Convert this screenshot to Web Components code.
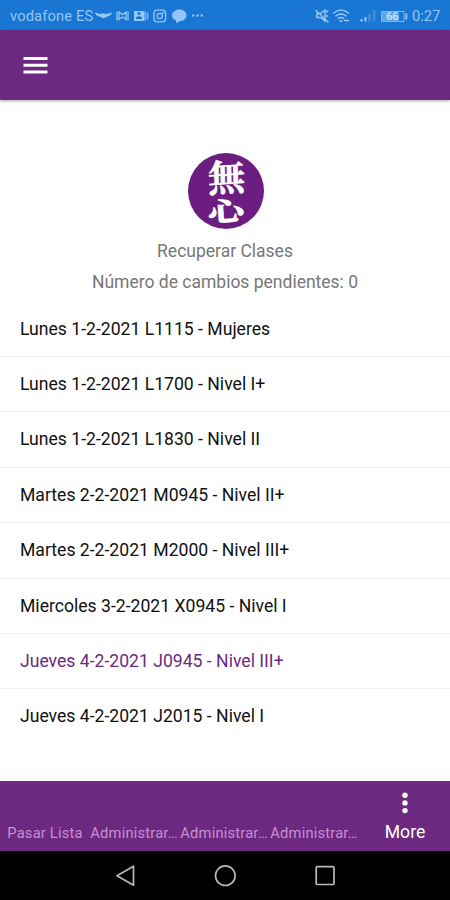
<!DOCTYPE html>
<html lang="es">
<head>
<meta charset="utf-8">
<title>Recuperar Clases</title>
<style>
html, body {
  margin: 0;
  height: 100%;
}
body {
  font-family: Roboto, sans-serif;
  background: #fff;
  overflow: hidden;
}
</style>
</head>
<body>
<attendance-app></attendance-app>
<script>
class ShadowElement extends HTMLElement {
    constructor() {
        super();
        this.attachShadow({ mode: "open" });
        const template = document.createElement("template");
        template.innerHTML = this.constructor.html;
        this.shadowRoot.appendChild(template.content.cloneNode(true));
    }
}

class StatusBar extends ShadowElement {
    static html = `
<style>
:host {
  display: flex;
  align-items: center;
  justify-content: space-between;
  box-sizing: border-box;
  height: 30px;
  padding: 2px 9px 0 10px;
  background: #1976d2;
  color: #93c6f8;
  font-size: 14.700px;
}
.left, .right { display: flex; align-items: center; }
.carrier { width: 84px; white-space: nowrap; letter-spacing: .15px; }
svg { display: block; flex: none; }
.time { margin-left: 3px; width: 29px; white-space: nowrap; }
.battery { position: relative; margin-left: 5px; width: 28px; height: 13px; }
.battery span {
  position: absolute;
  left: 5px;
  top: 0;
  font-size: 11px;
  font-weight: 700;
  line-height: 13px;
  color: #c5e2ff;
}
</style>
<div class="left">
  <span class="carrier">vodafone ES</span>
  <svg width="112" height="16" viewBox="0 0 112 16" fill="currentColor">
    <path d="M1 4.500 L6 6 L9 5.300 L12 6 L18 4.500 Q17 8 13.500 8.500 L9.500 10.500 L6 8.700 Q2 8.500 1 4.500Z"/>
    <path d="M23 3.500V12.500M34 3.500V12.500M25 4L28.500 6.500L32 4V11.500L28.500 9L25 11.500Z" fill="none" stroke="currentColor" stroke-width="1.300"/>
    <path fill-rule="evenodd" d="M40 3h10.500v10H40zM43.500 5.500a1.500 1.500 0 1 0 3 0a1.500 1.500 0 1 0-3 0M42 11V9.500q3-2.500 6 0V11z"/>
    <path d="M51.300 3.500h1v9h-1zM53.300 4.500h1v7h-1z"/>
    <g fill="none" stroke="currentColor" stroke-width="1.300">
      <rect x="60" y="2.200" width="11.600" height="11.600" rx="3"/>
      <circle cx="65.800" cy="8" r="2.700"/>
    </g>
    <circle cx="69" cy="4.800" r=".9"/>
    <path d="M85.500 1.500c4.200 0 7 2.500 7 5.800s-2.800 5.700-6 5.700l-4.500 2v-2.800C79.500 11.500 78 10 78 7.300c0-3.300 3.300-5.800 7.500-5.800z"/>
    <circle cx="99.200" cy="7.500" r="1.200"/><circle cx="103.500" cy="7.500" r="1.200"/><circle cx="107.800" cy="7.500" r="1.200"/>
  </svg>
</div>
<div class="right">
  <svg width="64" height="16" viewBox="0 0 64 16" fill="none" stroke="currentColor" stroke-width="1.500">
    <path d="M5 5.500h3.500l4.500-3.500v11l-4.500-3.500H5zM3.500 2l13 12.500M14.500 4.500l1.500-2M14 8h2"/>
    <path d="M21 5.500q8-7 16 0M23.500 8.300q5.500-4.800 11 0M26 10.800q3-2.500 6 0"/>
    <path d="M27.500 13h3M32 12.500h5" stroke-width="1.700"/>
    <path d="M49.500 13.500v-2.500M53.500 13.500V9" stroke-width="2"/>
    <path d="M57.500 13.500V6M62 13.500V2" stroke-width="2.600" opacity=".3"/>
  </svg>
  <div class="battery">
    <svg width="28" height="13" viewBox="0 0 28 13">
      <rect x="0" y="1" width="18" height="11" rx="1" fill="#5ea5ec"/>
      <path d="M.5 1.500h22.500v10H.5z" fill="none" stroke="#78b5f1"/>
      <path d="M24.300 3.500h2v6h-2z" fill="#8cc1f5"/>
    </svg>
    <span>66</span>
  </div>
  <span class="time">0:27</span>
</div>`;
}

class TopBar extends ShadowElement {
    static html = `
<style>
:host {
  display: flex;
  align-items: center;
  box-sizing: border-box;
  height: 70px;
  padding-left: 23px;
  background: #6c297f;
  box-shadow: 0 1px 3px rgba(0, 0, 0, .35);
}
svg { display: block; }
</style>
<svg width="25" height="18" viewBox="0 0 25 18" fill="#fff">
  <path d="M.5 1h24v3H.5zM.5 7.700h24v3H.5zM.5 14.400h24v3H.5z"/>
</svg>`;
}

class DojoLogo extends ShadowElement {
    static html = `
<style>
:host {
  display: flex;
  flex-direction: column;
  align-items: center;
  box-sizing: border-box;
  width: 76px;
  height: 76px;
  border-radius: 50%;
  background: #6c1d80;
  color: #fff;
  font-family: "Noto Serif CJK JP", "Noto Sans CJK JP", sans-serif;
  font-weight: 700;
}
span { display: block; flex: none; }
.mu {
  height: 44px;
  line-height: 44px;
  font-size: 37px;
  transform: rotate(-4deg) skewX(-3deg);
  -webkit-text-stroke: .7px #fff;
}
.shin {
  height: 26px;
  line-height: 26px;
  font-size: 36px;
  transform: rotate(-4deg) scaleY(.72);
  -webkit-text-stroke: 1.2px #fff;
}
</style>
<span class="mu">無</span>
<span class="shin">心</span>`;
}

class ClassItem extends ShadowElement {
    static html = `
<style>
:host {
  display: block;
  box-sizing: border-box;
  height: 55.430px;
  padding-left: 20px;
  border-bottom: 1px solid #f0f0f0;
  color: #111;
  font-size: 17.600px;
  line-height: 55px;
  white-space: nowrap;
}
:host([selected]) { color: #6c297f; }
:host(:last-of-type) { border-bottom-color: transparent; }
</style>
<slot></slot>`;
}

class TabItem extends ShadowElement {
    static html = `
<style>
:host {
  display: flex;
  flex-direction: column;
  align-items: center;
  justify-content: flex-end;
  box-sizing: border-box;
  width: 90px;
  height: 70px;
  padding-bottom: 9px;
  color: #c78fd5;
  font-size: 14.700px;
  line-height: 18px;
  letter-spacing: .2px;
  white-space: nowrap;
}
:host([active]) {
  padding-bottom: 8px;
  color: #fff;
  font-size: 17.600px;
  line-height: 22px;
  letter-spacing: 0;
}
</style>
<slot name="icon"></slot>
<slot></slot>`;
}

class TabBar extends ShadowElement {
    static html = `
<style>
:host { display: flex; height: 70px; background: #6c297f; }
svg { display: block; margin-bottom: 7px; }
.long { padding-right: 2px; }
</style>
<tab-item>Pasar Lista</tab-item>
<tab-item class="long">Administrar…</tab-item>
<tab-item class="long">Administrar…</tab-item>
<tab-item class="long">Administrar…</tab-item>
<tab-item active>
  <svg slot="icon" width="6" height="22" viewBox="0 0 6 22" fill="#fff">
    <circle cx="3" cy="3.200" r="2.700"/><circle cx="3" cy="10.900" r="2.700"/><circle cx="3" cy="18.600" r="2.700"/>
  </svg>More</tab-item>`;
}

class NavKeys extends ShadowElement {
    static html = `
<style>
:host {
  display: flex;
  align-items: center;
  justify-content: center;
  gap: 76px;
  height: 49px;
  background: #000;
}
svg { display: block; }
</style>
<svg width="24" height="24" viewBox="0 0 24 24" fill="none" stroke="#b9b9b9" stroke-width="1.700" stroke-linejoin="round"><path d="M4 11.700L20.500 2.200v19z"/></svg>
<svg width="24" height="24" viewBox="0 0 24 24" fill="none" stroke="#b9b9b9" stroke-width="1.700"><circle cx="12.300" cy="11.700" r="9.800"/></svg>
<svg width="24" height="24" viewBox="0 0 24 24" fill="none" stroke="#b9b9b9" stroke-width="1.700"><rect x="3.200" y="2.700" width="17.800" height="17.800" rx="1"/></svg>`;
}

class AttendanceApp extends ShadowElement {
    static html = `
<style>
:host { display: flex; flex-direction: column; height: 900px; }
main { flex: 1; display: flex; flex-direction: column; min-height: 0; }
dojo-logo { align-self: center; margin: 53px 0 7px 2px; }
p {
  margin: 0;
  color: #777;
  font-size: 17.500px;
  line-height: 31px;
  text-align: center;
}
section { margin-top: 3.500px; }
</style>
<status-bar></status-bar>
<top-bar></top-bar>
<main>
  <dojo-logo></dojo-logo>
  <p>Recuperar Clases</p>
  <p>Número de cambios pendientes: 0</p>
  <section>
    <class-item>Lunes 1-2-2021 L1115 - Mujeres</class-item>
    <class-item>Lunes 1-2-2021 L1700 - Nivel I+</class-item>
    <class-item>Lunes 1-2-2021 L1830 - Nivel II</class-item>
    <class-item>Martes 2-2-2021 M0945 - Nivel II+</class-item>
    <class-item>Martes 2-2-2021 M2000 - Nivel III+</class-item>
    <class-item>Miercoles 3-2-2021 X0945 - Nivel I</class-item>
    <class-item selected>Jueves 4-2-2021 J0945 - Nivel III+</class-item>
    <class-item>Jueves 4-2-2021 J2015 - Nivel I</class-item>
  </section>
</main>
<tab-bar></tab-bar>
<nav-keys></nav-keys>`;
}

customElements.define("status-bar", StatusBar);
customElements.define("top-bar", TopBar);
customElements.define("dojo-logo", DojoLogo);
customElements.define("class-item", ClassItem);
customElements.define("tab-item", TabItem);
customElements.define("tab-bar", TabBar);
customElements.define("nav-keys", NavKeys);
customElements.define("attendance-app", AttendanceApp);
</script>
</body>
</html>
